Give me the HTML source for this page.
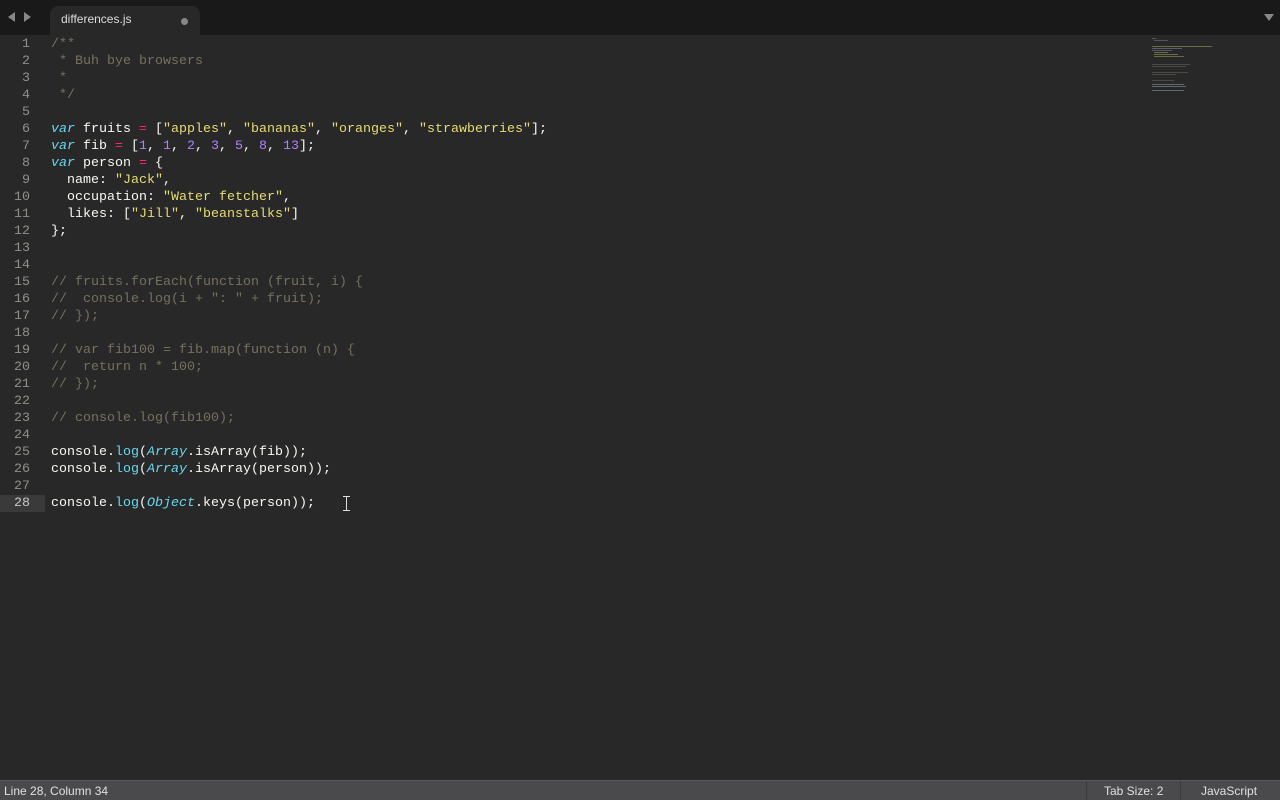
<!DOCTYPE html>
<html><head><meta charset="utf-8"><style>
html,body{margin:0;padding:0;width:1280px;height:800px;overflow:hidden;background:#282828;}
body{position:relative;font-family:"Liberation Mono",monospace;}
#tabbar{position:absolute;left:0;top:0;width:1280px;height:35px;background:#191919;}
#tab{position:absolute;left:50px;top:6px;width:150px;height:29px;background:#282828;border-radius:8px 8px 0 0;}
#tab span{position:absolute;left:11px;top:6px;font:12px "Liberation Sans",sans-serif;color:#ddd;}
#tab i{position:absolute;left:131px;top:12px;width:7px;height:7px;border-radius:50%;background:#888;}
.arr{position:absolute;top:12px;width:0;height:0;border-top:5px solid transparent;border-bottom:5px solid transparent;}
#code{position:absolute;left:0;top:36px;font-size:13.33px;line-height:17px;color:#f8f8f2;}
.ln{display:block;height:17px;white-space:pre;}
.n{display:inline-block;width:30px;text-align:right;color:#8f908a;margin-right:21px;}
.cur{background:#3a3a3a;}
.cur .n{color:#c8c8c8;}
.c{color:#75715e}.k{color:#66d9ef;font-style:italic}.o{color:#f92672}.s{color:#e6db74}.m{color:#ae81ff}.f{color:#66d9ef}
#status{position:absolute;left:0;top:780px;width:1280px;height:20px;background:#4a494c;border-top:1px solid #5a595c;box-sizing:border-box;font:12px "Liberation Sans",sans-serif;color:#e0e0e0;}
#status span{position:absolute;top:3px;}
.sep{position:absolute;top:0;width:1px;height:20px;background:#3a393c;}
#mini{position:absolute;left:1150px;top:36px;width:60px;height:60px;}
#mini div{position:absolute;height:1px;}
</style></head><body>
<div id="tabbar">
<div class="arr" style="left:8px;border-right:7px solid #888"></div>
<div class="arr" style="left:24px;border-left:7px solid #888"></div>
<div id="tab"><span>differences.js</span><i></i></div>
<div class="arr" style="left:1264px;top:14px;border:5px solid transparent;border-top:7px solid #888;border-bottom:0"></div>
</div>
<div id="mini">
<div style="left:2px;top:2px;width:4px;background:#555"></div>
<div style="left:4px;top:4px;width:14px;background:#555"></div>
<div style="left:2px;top:10px;width:60px;background:#6a6a45"></div>
<div style="left:2px;top:12px;width:30px;background:#5a5a70"></div>
<div style="left:2px;top:14px;width:20px;background:#555"></div>
<div style="left:4px;top:16px;width:14px;background:#6a6a45"></div>
<div style="left:4px;top:18px;width:24px;background:#6a6a45"></div>
<div style="left:4px;top:20px;width:30px;background:#6a6a45"></div>
<div style="left:2px;top:28px;width:38px;background:#4a4a40"></div>
<div style="left:2px;top:30px;width:34px;background:#4a4a40"></div>
<div style="left:2px;top:36px;width:36px;background:#4a4a40"></div>
<div style="left:2px;top:38px;width:24px;background:#4a4a40"></div>
<div style="left:2px;top:44px;width:22px;background:#4a4a40"></div>
<div style="left:2px;top:48px;width:32px;background:#5a6a70"></div>
<div style="left:2px;top:50px;width:34px;background:#5a6a70"></div>
<div style="left:2px;top:54px;width:32px;background:#5a6a70"></div>
</div>
<div id="code">
<span class="ln"><span class="n">1</span><span class="c">/**</span></span>
<span class="ln"><span class="n">2</span><span class="c"> * Buh bye browsers</span></span>
<span class="ln"><span class="n">3</span><span class="c"> *</span></span>
<span class="ln"><span class="n">4</span><span class="c"> */</span></span>
<span class="ln"><span class="n">5</span></span>
<span class="ln"><span class="n">6</span><span class="k">var</span> fruits <span class="o">=</span> [<span class="s">"apples"</span>, <span class="s">"bananas"</span>, <span class="s">"oranges"</span>, <span class="s">"strawberries"</span>];</span>
<span class="ln"><span class="n">7</span><span class="k">var</span> fib <span class="o">=</span> [<span class="m">1</span>, <span class="m">1</span>, <span class="m">2</span>, <span class="m">3</span>, <span class="m">5</span>, <span class="m">8</span>, <span class="m">13</span>];</span>
<span class="ln"><span class="n">8</span><span class="k">var</span> person <span class="o">=</span> {</span>
<span class="ln"><span class="n">9</span>  name: <span class="s">"Jack"</span>,</span>
<span class="ln"><span class="n">10</span>  occupation: <span class="s">"Water fetcher"</span>,</span>
<span class="ln"><span class="n">11</span>  likes: [<span class="s">"Jill"</span>, <span class="s">"beanstalks"</span>]</span>
<span class="ln"><span class="n">12</span>};</span>
<span class="ln"><span class="n">13</span></span>
<span class="ln"><span class="n">14</span></span>
<span class="ln"><span class="n">15</span><span class="c">// fruits.forEach(function (fruit, i) {</span></span>
<span class="ln"><span class="n">16</span><span class="c">//  console.log(i + ": " + fruit);</span></span>
<span class="ln"><span class="n">17</span><span class="c">// });</span></span>
<span class="ln"><span class="n">18</span></span>
<span class="ln"><span class="n">19</span><span class="c">// var fib100 = fib.map(function (n) {</span></span>
<span class="ln"><span class="n">20</span><span class="c">//  return n * 100;</span></span>
<span class="ln"><span class="n">21</span><span class="c">// });</span></span>
<span class="ln"><span class="n">22</span></span>
<span class="ln"><span class="n">23</span><span class="c">// console.log(fib100);</span></span>
<span class="ln"><span class="n">24</span></span>
<span class="ln"><span class="n">25</span>console.<span class="f">log</span>(<span class="k">Array</span>.isArray(fib));</span>
<span class="ln"><span class="n">26</span>console.<span class="f">log</span>(<span class="k">Array</span>.isArray(person));</span>
<span class="ln"><span class="n">27</span></span>
<span class="ln"><span class="n cur" style="width:30px;padding-left:0">28</span>console.<span class="f">log</span>(<span class="k">Object</span>.keys(person));</span>
</div>
<div style="position:absolute;left:0;top:495px;width:45px;height:17px;background:#3a3a3a"></div>
<div style="position:absolute;left:0;top:495px;width:30px;height:17px;text-align:right;font:13.33px/17px 'Liberation Mono',monospace;color:#c8c8c8">28</div>
<div style="position:absolute;left:346px;top:496px;width:1px;height:15px;background:#ddd"></div>
<div style="position:absolute;left:343px;top:496px;width:7px;height:1px;background:#ddd"></div>
<div style="position:absolute;left:343px;top:510px;width:7px;height:1px;background:#ddd"></div>
<div id="status">
<span style="left:4px">Line 28, Column 34</span>
<div class="sep" style="left:1086px"></div>
<span style="left:1104px">Tab Size: 2</span>
<div class="sep" style="left:1180px"></div>
<span style="left:1201px">JavaScript</span>
</div>
</body></html>
